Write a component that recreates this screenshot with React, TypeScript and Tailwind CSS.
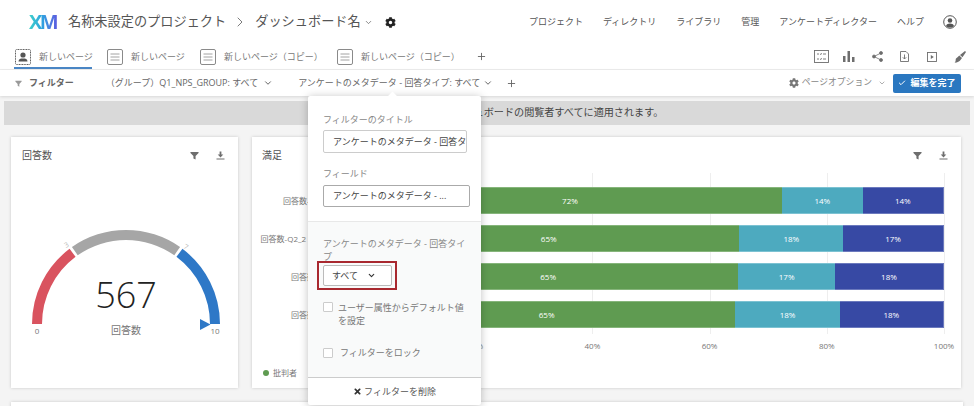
import { ChevronDown, ChevronRight, Check, Plus } from "lucide-react";
import { FaCog, FaTimes } from "react-icons/fa";

const navItems = ["プロジェクト", "ディレクトリ", "ライブラリ", "管理", "アンケートディレクター", "ヘルプ"];

const bars = [
  { label: "回答数-Q2_1 -満足", green: 72.5, teal: 13.8, blue: 13.9, text: ["72%", "14%", "14%"] },
  { label: "回答数-Q2_2 - サービス..", green: 65.1, teal: 17.7, blue: 17.2, text: ["65%", "18%", "17%"] },
  { label: "回答数-Q2_3 -品", green: 64.9, teal: 16.5, blue: 18.6, text: ["65%", "17%", "18%"] },
  { label: "回答数-Q2_4 -価", green: 64.4, teal: 17.8, blue: 17.8, text: ["65%", "18%", "18%"] },
];

function arc(from: number, to: number) {
  const cx = 115, cy = 151, outer = 94, inner = 84;
  const pt = (r: number, v: number) => {
    const a = Math.PI - (v / 10) * Math.PI;
    return `${(cx + r * Math.cos(a)).toFixed(2)} ${(cy - r * Math.sin(a)).toFixed(2)}`;
  };
  return `M${pt(outer, from)} A${outer} ${outer} 0 0 1 ${pt(outer, to)} L${pt(inner, to)} A${inner} ${inner} 0 0 0 ${pt(inner, from)} Z`;
}

function Funnel({ className }: { className: string }) {
  return (
    <svg viewBox="0 0 10 10" className={className} fill="currentColor">
      <path d="M0.500 1h9v1.200L6.200 5.600V9.500L3.800 8.300V5.600L0.500 2.200z" />
    </svg>
  );
}

function PageIcon() {
  return (
    <svg viewBox="0 0 16 16" className="w-[16px] h-[16px] shrink-0 text-[#8a8a8a]" fill="none" stroke="currentColor">
      <rect x="0.500" y="0.500" width="15" height="15" rx="1.500" />
      <path d="M3.500 5h9M3.500 8h9M3.500 11h9" strokeWidth="0.800" />
    </svg>
  );
}

function Tab({ text, w, active }: { text: string; w: string; active?: boolean }) {
  return (
    <div className={`relative flex items-center gap-[8px] ${w} h-[24px]`}>
      {active ? (
        <svg viewBox="0 0 16 16" className="w-[16px] h-[16px] shrink-0 text-[#555]" fill="none" stroke="currentColor">
          <rect x="0.500" y="0.500" width="15" height="15" rx="1" strokeDasharray="1 0.600" />
          <circle cx="8" cy="6" r="2.600" fill="currentColor" stroke="none" />
          <path d="M3.500 12.500c0-2.500 2-3 4.500-3s4.500.500 4.500 3z" fill="currentColor" stroke="none" />
        </svg>
      ) : (
        <PageIcon />
      )}
      <span className="text-[9px] text-[#777] whitespace-nowrap">{text}</span>
      {active && <div className="absolute left-[-1px] right-[-1px] bottom-0 h-[2px] bg-[#4a86c5]" />}
    </div>
  );
}

function CardIcons() {
  return (
    <div className="flex items-center gap-[17px] text-[#6e6e6e]">
      <Funnel className="w-[9px] h-[9px]" />
      <svg viewBox="0 0 9 9" className="w-[9px] h-[9px]" fill="currentColor">
        <path d="M3.600 0.500h1.800v3H7.300L4.500 6.400 1.700 3.500h1.900zM0.500 7.600h8v1h-8z" />
      </svg>
    </div>
  );
}

export default function App() {
  return (
    <div
      className="relative h-[406px] w-[974px] overflow-hidden bg-[#f4f4f4] text-[#555]"
      style={{ fontFamily: '"Open Sans", "Noto Sans CJK JP", sans-serif' }}
    >
      {/* header */}
      <div className="flex items-center h-[44px] bg-white pl-[29px] pr-[17px]">
        <span className="w-[28px] text-[20px] font-bold leading-none tracking-[-2.500px] bg-gradient-to-r from-[#3fd0c9] via-[#2f9fe0] to-[#5a5be0] bg-clip-text text-transparent">
          XM
        </span>
        <span className="ml-[11px] text-[13.200px] text-[#555]">名称未設定のプロジェクト</span>
        <ChevronRight className="ml-[6px] w-[16px] h-[16px] text-[#666]" strokeWidth={1.300} />
        <span className="ml-[7px] text-[13.200px] text-[#555]">ダッシュボード名</span>
        <ChevronDown className="ml-[3px] w-[9px] h-[9px] text-[#666]" />
        <FaCog className="ml-[12px] w-[11px] h-[11px] text-[#222]" />
        <div className="ml-auto flex items-center gap-[20px] text-[9px] text-[#555]">
          {navItems.map((n) => (
            <span key={n}>{n}</span>
          ))}
          <svg viewBox="0 0 14 14" className="w-[14px] h-[14px] -ml-[1px] text-[#555]" fill="none" stroke="currentColor">
            <circle cx="7" cy="7" r="6.300" />
            <circle cx="7" cy="5.500" r="2.300" fill="currentColor" stroke="none" />
            <path d="M3 11c.600-2 2.200-2.600 4-2.600s3.400.600 4 2.600c-1 1-2.500 1.600-4 1.600s-3-.600-4-1.600z" fill="currentColor" stroke="none" />
          </svg>
        </div>
      </div>

      {/* tabs */}
      <div className="flex items-center h-[26px] bg-white pl-[15px] pr-[8px] border-b border-[#eee]">
        <Tab text="新しいページ" w="w-[76px]" active />
        <div className="w-[16px]" />
        <Tab text="新しいページ" w="w-[77px]" />
        <div className="w-[16px]" />
        <Tab text="新しいページ（コピー）" w="w-[116px]" />
        <div className="w-[21px]" />
        <Tab text="新しいページ（コピー）" w="w-[116px]" />
        <Plus className="ml-[23px] w-[11px] h-[11px] text-[#666]" />
        <div className="ml-auto flex items-center text-[#6e6e6e]">
          <svg viewBox="0 0 15 13" className="w-[15px] h-[13px]" fill="none" stroke="currentColor" strokeWidth="0.900">
            <rect x="0.500" y="0.500" width="14" height="12" />
            <path d="M3 4h2M3 9h2M9 4h3M9 9h3M7.500 3l-1 2M7.500 8l-1 2" />
          </svg>
          <svg viewBox="0 0 12 11" className="ml-[14px] w-[12px] h-[11px]" fill="currentColor">
            <path d="M0 5h2.500v6H0zM4.500 0H7v11H4.500zM9 6h2.500v5H9z" />
          </svg>
          <svg viewBox="0 0 11 11" className="ml-[17px] w-[11px] h-[11px]" fill="currentColor" stroke="currentColor" strokeWidth="0.800">
            <circle cx="9" cy="2" r="1.500" />
            <circle cx="2" cy="5.500" r="1.500" />
            <circle cx="9" cy="9" r="1.500" />
            <path d="M9 2L2 5.500 9 9" fill="none" />
          </svg>
          <svg viewBox="0 0 9 11" className="ml-[17px] w-[9px] h-[11px]" fill="none" stroke="currentColor" strokeWidth="0.900">
            <path d="M.500.500h5.500l2.500 2.500v7.500h-8z" />
            <path d="M4.500 3.500v4.500M2.800 6.300l1.700 1.700 1.700-1.700" />
          </svg>
          <svg viewBox="0 0 10 10" className="ml-[18px] w-[10px] h-[10px]" fill="none" stroke="currentColor" strokeWidth="0.900">
            <rect x="0.500" y="0.500" width="9" height="9" />
            <path d="M3.800 3v4L6.800 5z" fill="currentColor" stroke="none" />
          </svg>
          <svg viewBox="0 0 12 12" className="ml-[17px] w-[12px] h-[12px]" fill="currentColor">
            <path d="M11 0L12 1 8.500 6.300 6 4zM5.300 4.500l2.700 2.500-1.500 2c-1 1.300-2.800 2.500-6 2.800 1-.800 1.200-2 1.200-3.300 0-1 1-1.800 1.800-2.300z" />
          </svg>
        </div>
      </div>

      {/* filter bar */}
      <div className="relative flex items-center h-[26px] bg-white pl-[15px] pr-[13px] shadow-[0_1px_3px_rgba(0,0,0,0.12)]">
        <Funnel className="w-[7px] h-[7px] text-[#999]" />
        <span className="ml-[7px] text-[9px] font-bold text-[#666]">フィルター</span>
        <span className="ml-[32px] text-[9px] text-[#666] whitespace-nowrap">（グループ）Q1_NPS_GROUP: すべて</span>
        <ChevronDown className="ml-[5px] w-[10px] h-[10px] text-[#666]" strokeWidth={2.400} />
        <span className="ml-[25px] text-[9px] text-[#666] whitespace-nowrap">アンケートのメタデータ - 回答タイプ: すべて</span>
        <ChevronDown className="ml-[3px] w-[10px] h-[10px] text-[#666]" strokeWidth={2.400} />
        <Plus className="ml-[13px] w-[11px] h-[11px] text-[#666]" />
        <FaCog className="ml-auto w-[10px] h-[10px] text-[#777]" />
        <span className="ml-[3px] text-[8.800px] text-[#888]">ページオプション</span>
        <ChevronDown className="ml-[6px] w-[8px] h-[8px] text-[#888]" />
        <button className="ml-[7px] flex items-center justify-center gap-[4px] w-[68px] h-[19px] rounded-[2px] bg-[#2a77c0] text-white text-[9px] font-bold">
          <Check className="w-[8px] h-[8px]" strokeWidth={3} />
          編集を完了
        </button>
      </div>

      {/* notice */}
      <div className="mx-[4px] mt-[5px] h-[24px] pl-[12px] flex items-center justify-center bg-[#d9d9d9] text-[10.100px] text-[#444]">
        ページフィルターは、このダッシュボードの閲覧者すべてに適用されます。
      </div>

      {/* cards */}
      <div className="flex gap-[14px] mt-[12px] px-[11px]">
        <div className="w-[227px] h-[251px] shrink-0 bg-white shadow-[0_0_3px_rgba(0,0,0,0.18)]">
          <div className="flex items-center justify-between h-[36px] pl-[11px] pr-[13px]">
            <span className="text-[10px] text-[#555]">回答数</span>
            <CardIcons />
          </div>
          <svg viewBox="0 0 227 215" className="w-[227px] h-[215px]" style={{ fontFamily: '"Open Sans", "Noto Sans CJK JP", sans-serif' }}>
            <path d={arc(0, 2.950)} fill="#d9535f" />
            <path d={arc(3.050, 6.950)} fill="#a6a6a6" />
            <path d={arc(7.050, 10)} fill="#2e78c7" />
            <path d="M189 146l10.500 5.500L189 157z" fill="#2e78c7" />
            <text x="55" y="75" fontSize="7" fill="#bbb" transform="rotate(-30 55 75)">3</text>
            <text x="172" y="75" fontSize="7" fill="#bbb" transform="rotate(30 172 75)">7</text>
            <text x="26" y="161" fontSize="8" fill="#777" textAnchor="middle">0</text>
            <text x="204" y="161" fontSize="8" fill="#777" textAnchor="middle">10</text>
            <text x="115" y="135" fontSize="36" fontWeight="300" fill="#222" textAnchor="middle">567</text>
            <text x="115" y="161" fontSize="10" fill="#777" textAnchor="middle">回答数</text>
          </svg>
        </div>

        <div className="flex-1 h-[251px] mr-[2px] bg-white shadow-[0_0_3px_rgba(0,0,0,0.18)]">
          <div className="flex items-center justify-between h-[36px] pl-[10px] pr-[13px]">
            <span className="text-[10px] text-[#555]">満足</span>
            <CardIcons />
          </div>
          <div className="flex">
            <div className="w-[106px] shrink-0 pr-[9px] pt-[14px] flex flex-col gap-[11px]">
              {bars.map((b) => (
                <div key={b.label} className="h-[27px] flex items-center justify-end text-[8px] text-[#777] whitespace-nowrap">
                  {b.label}
                </div>
              ))}
            </div>
            <div className="relative w-[586px] h-[161px] pt-[14px] flex flex-col gap-[11px]">
              {[40, 60, 80, 100].map((g) => (
                <div key={g} className="absolute top-0 bottom-0 w-px bg-[#eee]" style={{ left: `${g}%` }} />
              ))}
              {bars.map((b) => (
                <div key={b.label} className="relative flex h-[27px] text-[8px] text-white">
                  <div className="flex items-center justify-center bg-[#5f9b51] border-y border-[#86b57b]" style={{ width: `${b.green}%` }}>{b.text[0]}</div>
                  <div className="flex items-center justify-center bg-[#4daabf] border-y border-[#7cc2d2]" style={{ width: `${b.teal}%` }}>{b.text[1]}</div>
                  <div className="flex items-center justify-center bg-[#3749a4] border border-[#6b79bd] border-l-0" style={{ width: `${b.blue}%` }}>{b.text[2]}</div>
                </div>
              ))}
            </div>
          </div>
          <div className="relative ml-[106px] w-[586px] h-[12px] text-[8px] text-[#777]">
            {[20, 40, 60, 80, 100].map((g) => (
              <span key={g} className="absolute -translate-x-1/2 top-[8px] leading-none" style={{ left: `${g}%` }}>{g}%</span>
            ))}
          </div>
          <div className="flex items-center gap-[14px] pl-[11px] mt-[21px] text-[8px] text-[#777]">
            <div className="flex items-center gap-[4px]">
              <span className="w-[6px] h-[6px] rounded-full bg-[#5f9b51]" />
              批判者
            </div>
            <div className="flex items-center gap-[4px]">
              <span className="w-[6px] h-[6px] rounded-full bg-[#4daabf]" />
              中立者
            </div>
          </div>
        </div>
      </div>

      <div className="mx-[11px] mt-[14px] h-[20px] bg-white shadow-[0_0_3px_rgba(0,0,0,0.18)]" />

      {/* popover */}
      <div className="absolute left-[308px] top-[96px] w-[173px] h-[309px] bg-white rounded-[2px] shadow-[0_1px_8px_rgba(0,0,0,0.25)] flex flex-col text-[9px]">
        <div className="absolute left-[81px] top-[-3px] w-[7px] h-[7px] rotate-45 bg-white" />
        <div className="h-[126px] px-[15px] pt-[18px] border-b border-[#e8e8e8]">
          <div className="text-[#888] leading-[12px]">フィルターのタイトル</div>
          <div className="mt-[4px] w-[144px] h-[23px] flex items-center overflow-hidden whitespace-nowrap border border-[#ccc] rounded-[2px] px-[9px] text-[#444]">
            アンケートのメタデータ - 回答タ
          </div>
          <div className="mt-[15px] text-[#888] leading-[12px]">フィールド</div>
          <div className="mt-[5px] w-[147px] h-[22px] flex items-center whitespace-nowrap border border-[#aaa] rounded-[2px] px-[9px] text-[#444]">
            アンケートのメタデータ - ...
          </div>
        </div>
        <div className="flex-1 px-[15px] pt-[15px] bg-[#f9fafa]">
          <div className="text-[#888] leading-[13px]">アンケートのメタデータ - 回答タイプ</div>
          <div className="-ml-[6px] mt-[-2px] w-[80px] h-[29px] border-2 border-[#a8282f] flex items-center pl-[4px]">
            <div className="w-[69px] h-[21px] flex items-center gap-[9px] pl-[8px] bg-white border border-[#bbb] rounded-[2px] text-[#444]">
              すべて
              <ChevronDown className="w-[9px] h-[9px] text-[#333]" strokeWidth={3} />
            </div>
          </div>
          <div className="flex items-start gap-[5px] mt-[11px] text-[#777] leading-[13px]">
            <span className="mt-[1px] w-[10px] h-[10px] shrink-0 border border-[#ccc] bg-white rounded-[1px]" />
            <span>ユーザー属性からデフォルト値を設定</span>
          </div>
          <div className="flex items-center gap-[7px] mt-[19px] text-[#777]">
            <span className="w-[10px] h-[10px] shrink-0 border border-[#ccc] bg-white rounded-[1px]" />
            <span>フィルターをロック</span>
          </div>
        </div>
        <div className="h-[28px] flex items-center justify-center gap-[2px] border-t border-[#ccc] text-[#555]">
          <FaTimes className="w-[9px] h-[9px] text-[#333]" />
          フィルターを削除
        </div>
      </div>
    </div>
  );
}
